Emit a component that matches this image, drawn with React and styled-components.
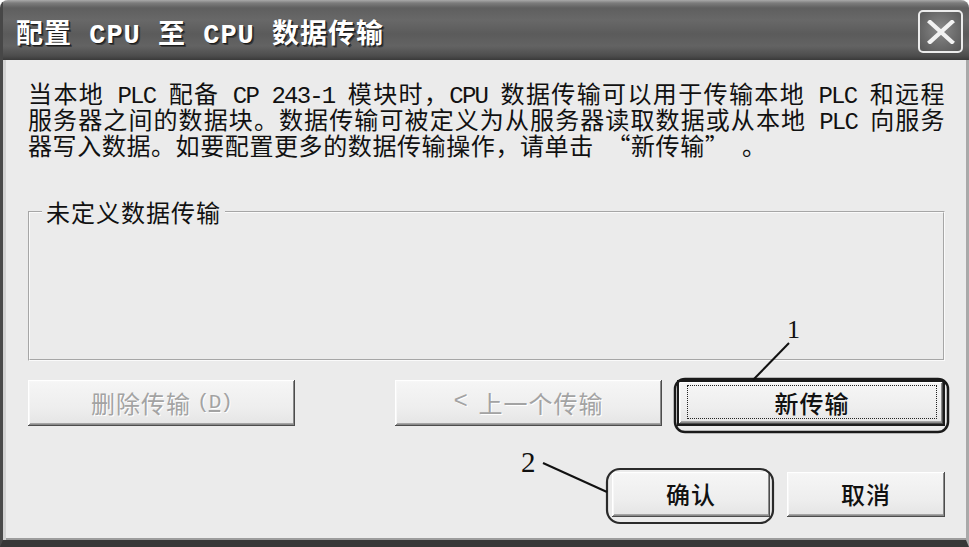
import React from "react";
import styled, { createGlobalStyle } from "styled-components";

const Global = createGlobalStyle`
  html, body { margin: 0; padding: 0; background: #ffffff; }
  body { font-family: "Noto Sans CJK SC", sans-serif; }
`;

const Window = styled.div`
  position: relative;
  width: 969px;
  height: 547px;
  display: flex;
  flex-direction: column;
  background: #ebebeb;
  border-radius: 8px 8px 0 0;
  overflow: hidden;
`;

const TitleBar = styled.div`
  height: 60px;
  flex: none;
  box-sizing: border-box;
  padding: 3px 6px 0 13px;
  display: flex;
  align-items: center;
  justify-content: space-between;
  background: linear-gradient(
    180deg,
    #a9a9a9 0px,
    #7c7c7c 3px,
    #5f5f5f 8px,
    #686868 20px,
    #5b5b5b 34px,
    #636363 46px,
    #4c4c4c 56px,
    #3a3a3a 60px
  );
  border-left: 3px solid #474747;
`;

const Title = styled.div`
  font-family: "Liberation Mono", "Noto Sans CJK SC", monospace;
  font-weight: 700;
  font-size: 27px;
  letter-spacing: 1px;
  color: #ffffff;
  white-space: pre;
  text-shadow: 1px 1px 0 #1c1c1c, 2px 2px 0 #3a3a3a;
`;

const CloseButton = styled.div`
  width: 45px;
  height: 43px;
  box-sizing: border-box;
  border: 2px solid #ececec;
  border-radius: 5px;
  background: radial-gradient(ellipse at 50% 45%, #8a8a8a 0%, #6c6c6c 55%, #555555 100%);
  display: flex;
  align-items: center;
  justify-content: center;
`;

const Body = styled.div`
  flex: 1;
  display: flex;
  flex-direction: column;
  padding: 20px 21px 0 25px;
  border-left: 3px solid #4a4a4a;
  border-right: 3px solid #a9a9a9;
  border-bottom: 7px solid #383838;
  box-shadow: inset 3px 0 0 #d2d2d2, inset 0 -2px 0 #9c9c9c;
`;

const Intro = styled.div`
  font-family: "Noto Sans CJK SC", sans-serif;
  font-size: 24px;
  line-height: 26px;
  letter-spacing: 0.6px;
  color: #111111;
`;

const Line = styled.div`
  height: 26px;
  white-space: pre-wrap;
  text-align: ${(p) => (p.$justify ? "justify" : "left")};
  text-align-last: ${(p) => (p.$justify ? "justify" : "auto")};
`;

const Latin = styled.span`
  font-family: "Liberation Mono", monospace;
  letter-spacing: -1.8px;
  line-height: 1;
`;

const GroupBox = styled.fieldset`
  margin: 41px 0 0 0;
  padding: 0;
  min-width: 0;
  height: 162px;
  box-sizing: border-box;
  border: 2px groove #fafafa;
`;

const GroupLabel = styled.legend`
  margin-left: 12px;
  padding: 0 4px;
  font-family: "Noto Sans CJK SC", sans-serif;
  font-size: 24px;
  line-height: 26px;
  letter-spacing: 1px;
  color: #111111;
`;

const ButtonRow = styled.div`
  display: flex;
  margin-top: 19px;
  height: 46px;
  flex: none;
`;

const ActionRow = styled.div`
  display: flex;
  justify-content: flex-end;
  gap: 17px;
  margin-top: 46px;
  height: 45px;
  flex: none;
`;

const Button = styled.div`
  box-sizing: border-box;
  width: ${(p) => p.$w}px;
  margin-left: ${(p) => p.$ml || 0}px;
  height: 100%;
  display: flex;
  align-items: center;
  justify-content: center;
  padding: ${(p) => (p.$default ? "3px 6px 5px 8px" : "0 0 2px 0")};
  background: linear-gradient(180deg, #f6f6f6 0%, #eeeeee 60%, #e4e4e4 100%);
  border: ${(p) => (p.$default ? "2px solid #1b1b1b" : "none")};
  box-shadow: inset -1px -1px 0 #4c4c4c, inset 1px 1px 0 #ffffff,
    inset -2px -2px 0 #8a8a8a, inset 2px 2px 0 #f7f7f7, inset 0 -3px 0 #a4a4a4;
  font-family: "Noto Sans CJK SC", sans-serif;
  font-size: 24px;
  font-weight: ${(p) => (p.$disabled ? 400 : 500)};
  letter-spacing: 1px;
  color: ${(p) => (p.$disabled ? "#a3a3a3" : "#111111")};
  text-shadow: ${(p) => (p.$disabled ? "1px 1px 0 #ffffff" : "none")};
  white-space: pre;
`;

const FocusFrame = styled.div`
  flex: 1;
  align-self: stretch;
  display: flex;
  align-items: center;
  justify-content: center;
  border: 1px dotted #222222;
`;

const Hint = styled.span`
  font-family: "Liberation Mono", monospace;
  font-size: 21px;
  letter-spacing: -1px;
  margin-left: 6px;
`;

const Overlay = styled.svg`
  position: absolute;
  left: 0;
  top: 0;
  pointer-events: none;
`;

export default function App() {
  return (
    <>
      <Global />
      <Window>
        <TitleBar>
          <Title>配置 CPU 至 CPU 数据传输</Title>
          <CloseButton>
            <svg width="28" height="24" viewBox="0 0 28 24">
              <path d="M3 2 L25 22 M25 2 L3 22" stroke="#f2f2f2" strokeWidth="4.2" strokeLinecap="square" />
            </svg>
          </CloseButton>
        </TitleBar>
        <Body>
          <Intro>
            <Line $justify>
              当本地<Latin> PLC </Latin>配备<Latin> CP 243-1 </Latin>模块时，<Latin>CPU </Latin>数据传输可以用于传输本地<Latin> PLC </Latin>和远程
            </Line>
            <Line $justify>
              服务器之间的数据块。数据传输可被定义为从服务器读取数据或从本地<Latin> PLC </Latin>向服务
            </Line>
            <Line>
              器写入数据。如要配置更多的数据传输操作，请单击<Latin> </Latin>“新传输”<Latin> </Latin>。
            </Line>
          </Intro>
          <GroupBox>
            <GroupLabel>未定义数据传输</GroupLabel>
          </GroupBox>
          <ButtonRow>
            <Button $w={267} $disabled>
              删除传输<Hint>
                (<u>D</u>)
              </Hint>
            </Button>
            <Button $w={267} $ml={100} $disabled>
              <Latin>{"< "}</Latin>上一个传输
            </Button>
            <Button $w={268} $ml={15} $default>
              <FocusFrame>新传输</FocusFrame>
            </Button>
          </ButtonRow>
          <ActionRow>
            <Button $w={158}>确认</Button>
            <Button $w={158}>取消</Button>
          </ActionRow>
        </Body>
        <Overlay width="969" height="547" viewBox="0 0 969 547">
          <rect x="675" y="379" width="273" height="53" rx="10" fill="none" stroke="#1a1a1a" strokeWidth="2.5" />
          <rect x="607" y="469" width="166" height="54" rx="13" fill="none" stroke="#2a2a2a" strokeWidth="2.2" />
          <line x1="789" y1="343" x2="753" y2="380" stroke="#111" strokeWidth="2" />
          <line x1="543" y1="463" x2="607" y2="492" stroke="#111" strokeWidth="2" />
          <text x="787" y="338" fontFamily="Liberation Serif, serif" fontSize="26" fill="#111">1</text>
          <text x="521" y="472" fontFamily="Liberation Serif, serif" fontSize="29" fill="#111">2</text>
        </Overlay>
      </Window>
    </>
  );
}
